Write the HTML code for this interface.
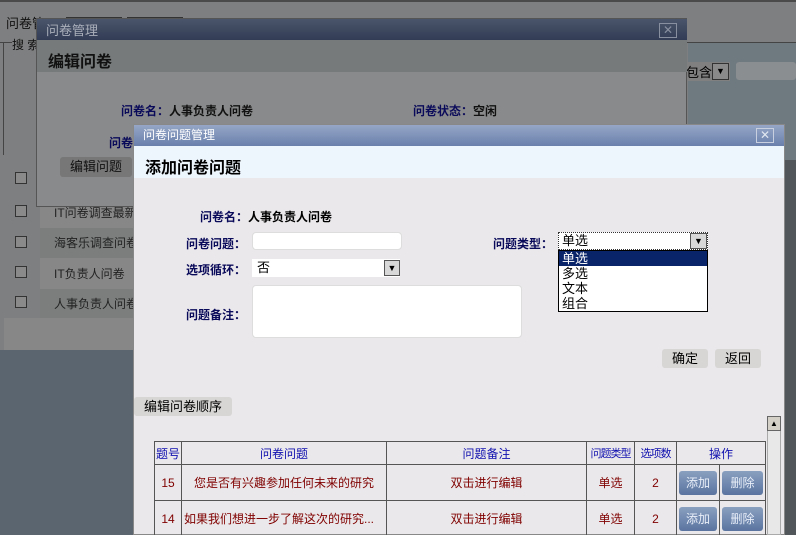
<!DOCTYPE html>
<html><head><meta charset="utf-8"><style>
*{margin:0;padding:0;box-sizing:border-box}
html{width:796px;height:535px;overflow:hidden}
body{width:796px;height:535px;overflow:hidden;position:relative;background:#7e7f80;font-family:"Liberation Sans","Noto Sans CJK SC","WenQuanYi Zen Hei",sans-serif;font-size:12px;color:#000}
.a{position:absolute}
.b{font-weight:bold}
.lbl{color:#0a0a5a;font-weight:bold;font-size:12px}
table{table-layout:fixed}
td{border:1px solid #555;text-align:center;font-size:12px;white-space:nowrap;overflow:hidden;padding:0}
.btn{background:linear-gradient(#8aa0c0,#5a74a0);color:#e8eef8;border-radius:3px;height:24px;line-height:24px;margin:0 2px}
</style></head><body>
<div class="a" style="left:0;top:0;width:796px;height:2px;background:#4a4a4a"></div>
<div class="a" style="left:6px;top:13px;font-size:13px;color:#111">问卷管</div>
<div class="a" style="left:66px;top:17px;width:56px;height:4px;background:#333"></div>
<div class="a" style="left:127px;top:17px;width:56px;height:4px;background:#333"></div>
<div class="a" style="left:0;top:42px;width:796px;height:1px;background:#444"></div>
<div class="a" style="left:3px;top:42px;width:1px;height:113px;background:#444"></div>
<div class="a" style="left:12px;top:36px;font-size:12px;color:#111;background:#7e7f80">搜 索</div>
<div class="a" style="left:688px;top:43px;width:108px;height:117px;background:#6f7a80"></div>
<div class="a" style="left:676px;top:62px;width:54px;height:19px;background:#808080;font-size:13px;padding-left:10px">包含</div>
<div class="a" style="left:712px;top:63px;width:17px;height:17px;background:#8a8a8a;border:1px solid #333;font-size:9px;text-align:center;line-height:15px">▼</div>
<div class="a" style="left:736px;top:62px;width:60px;height:18px;background:#8a8e90;border-radius:3px"></div>
<div class="a" style="left:4px;top:160px;width:130px;height:190px;background:#878787"></div>
<div class="a" style="left:4px;top:160px;width:36px;height:158px;background:#7d7f80"></div>
<div class="a" style="left:40px;top:228px;width:94px;height:30px;background:#7c7e7e"></div>
<div class="a" style="left:40px;top:289px;width:94px;height:29px;background:#7c7e7e"></div>
<div class="a" style="left:0;top:350px;width:134px;height:185px;background:#5b6570"></div>
<div class="a" style="left:784px;top:160px;width:12px;height:375px;background:#50565a"></div>
<div class="a" style="left:15px;top:172px;width:12px;height:12px;border:1px solid #333;background:#8a8a8a"></div>
<div class="a" style="left:15px;top:205px;width:12px;height:12px;border:1px solid #333;background:#8a8a8a"></div>
<div class="a" style="left:15px;top:236px;width:12px;height:12px;border:1px solid #333;background:#8a8a8a"></div>
<div class="a" style="left:15px;top:266px;width:12px;height:12px;border:1px solid #333;background:#8a8a8a"></div>
<div class="a" style="left:15px;top:296px;width:12px;height:12px;border:1px solid #333;background:#8a8a8a"></div>
<div class="a" style="left:54px;top:204px;color:#222">IT问卷调查最新</div>
<div class="a" style="left:54px;top:234px;color:#222">海客乐调查问卷</div>
<div class="a" style="left:54px;top:265px;color:#222">IT负责人问卷</div>
<div class="a" style="left:54px;top:295px;color:#222">人事负责人问卷</div>
<div class="a" style="left:36px;top:18px;width:651px;height:189px;background:#898a8b;border:1px solid #555"></div>
<div class="a" style="left:37px;top:19px;width:650px;height:21px;background:linear-gradient(#4a546a,#323c55)"></div>
<div class="a" style="left:46px;top:20px;color:#a9afba;font-size:13px">问卷管理</div>
<div class="a" style="left:659px;top:23px;width:18px;height:15px;border:1px solid #8890a0;color:#8890a0;font-size:12px;text-align:center;line-height:13px">✕</div>
<div class="a" style="left:37px;top:40px;width:650px;height:32px;background:#767a7a"></div>
<div class="a b" style="left:48px;top:48px;font-size:16px;color:#111">编辑问卷</div>
<div class="a lbl" style="left:121px;top:102px">问卷名：<span style="color:#111">人事负责人问卷</span></div>
<div class="a lbl" style="left:413px;top:102px">问卷状态：<span style="color:#111">空闲</span></div>
<div class="a lbl" style="left:109px;top:134px">问卷</div>
<div class="a" style="left:60px;top:157px;width:72px;height:20px;background:#777;border-radius:3px;text-align:center;line-height:20px;color:#111;font-size:13px">编辑问题</div>
<div class="a" style="left:133px;top:124px;width:652px;height:411px;background:#eae8ea;border:1px solid #888"></div>
<div class="a" style="left:134px;top:125px;width:650px;height:21px;background:linear-gradient(#95a6c6,#6a80ac)"></div>
<div class="a" style="left:143px;top:126px;color:#fff;font-size:12px">问卷问题管理</div>
<div class="a" style="left:756px;top:128px;width:18px;height:15px;border:1px solid #c8d0e0;color:#e0e6f0;font-size:12px;text-align:center;line-height:13px">✕</div>
<div class="a" style="left:134px;top:146px;width:650px;height:32px;background:#eef6fd"></div>
<div class="a b" style="left:145px;top:154px;font-size:16px;color:#000">添加问卷问题</div>
<div class="a lbl" style="left:200px;top:208px">问卷名：<span style="color:#000">人事负责人问卷</span></div>
<div class="a lbl" style="left:186px;top:235px">问卷问题：</div>
<div class="a" style="left:252px;top:232px;width:150px;height:18px;background:#fff;border-radius:4px;border:1px solid #ddd"></div>
<div class="a lbl" style="left:493px;top:235px">问题类型：</div>
<div class="a" style="left:558px;top:232px;width:150px;height:18px;background:#fff;border:1px dotted #333;font-size:13px;line-height:16px;padding-left:3px">单选</div>
<div class="a" style="left:690px;top:233px;width:17px;height:16px;background:#d8d8d8;border:1px solid #555;font-size:9px;text-align:center;line-height:14px">▼</div>
<div class="a" style="left:558px;top:250px;width:150px;height:62px;background:#fff;border:1px solid #000;font-size:13px;line-height:15px">
<div style="background:#0a246a;color:#fff;padding-left:3px">单选</div><div style="padding-left:3px">多选</div><div style="padding-left:3px">文本</div><div style="padding-left:3px">组合</div></div>
<div class="a lbl" style="left:186px;top:261px">选项循环：</div>
<div class="a" style="left:252px;top:259px;width:148px;height:18px;background:#fff;font-size:13px;line-height:18px;padding-left:5px">否</div>
<div class="a" style="left:384px;top:260px;width:16px;height:16px;background:#d8d8d8;border:1px solid #555;font-size:9px;text-align:center;line-height:14px">▼</div>
<div class="a lbl" style="left:186px;top:306px">问题备注：</div>
<div class="a" style="left:252px;top:285px;width:270px;height:53px;background:#fff;border-radius:4px;border:1px solid #ddd"></div>
<div class="a" style="left:662px;top:349px;width:46px;height:19px;background:#d8d6d4;border-radius:3px;text-align:center;line-height:19px;font-size:13px">确定</div>
<div class="a" style="left:715px;top:349px;width:46px;height:19px;background:#d8d6d4;border-radius:3px;text-align:center;line-height:19px;font-size:13px">返回</div>
<div class="a" style="left:134px;top:397px;width:98px;height:19px;background:#d8d6d4;border-radius:3px;text-align:center;line-height:19px;font-size:13px">编辑问卷顺序</div>
<div class="a" style="left:767px;top:416px;width:14px;height:119px;background:#e8e8e8;border:1px solid #aaa"></div>
<div class="a" style="left:767px;top:416px;width:14px;height:15px;background:#d4d0c8;border:1px solid #666;font-size:8px;text-align:center;line-height:13px">▲</div>
<table class="a" style="left:154px;top:441px;border-collapse:collapse;width:611px">
<colgroup><col style="width:27px"><col style="width:205px"><col style="width:200px"><col style="width:48px"><col style="width:42px"><col style="width:43px"><col style="width:46px"></colgroup>
<tr style="height:23px;color:#1010b0"><td>题号</td><td>问卷问题</td><td>问题备注</td><td style="font-size:11px;letter-spacing:-1px">问题类型</td><td style="font-size:11px;letter-spacing:-1px">选项数</td><td colspan="2">操作</td></tr>
<tr style="height:36px;color:#800000"><td>15</td><td>您是否有兴趣参加任何未来的研究</td><td>双击进行编辑</td><td>单选</td><td>2</td><td><div class="btn">添加</div></td><td><div class="btn">删除</div></td></tr>
<tr style="height:36px;color:#800000"><td>14</td><td style="text-align:left;padding-left:2px">如果我们想进一步了解这次的研究...</td><td>双击进行编辑</td><td>单选</td><td>2</td><td><div class="btn">添加</div></td><td><div class="btn">删除</div></td></tr>
</table>
</body></html>
